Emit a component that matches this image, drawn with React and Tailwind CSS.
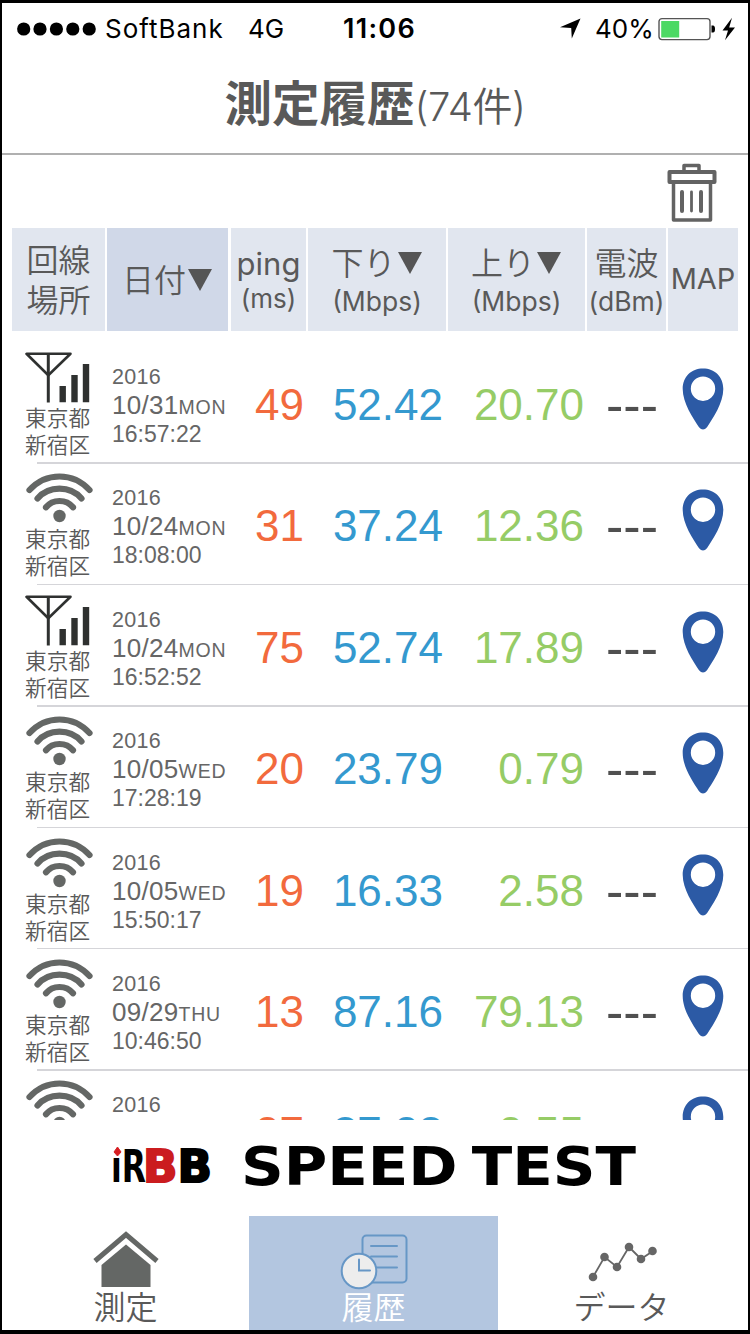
const ROWS = [
  { net: "cell", year: "2016", date: "10/31", day: "MON", time: "16:57:22", ping: "49", down: "52.42", up: "20.70" },
  { net: "wifi", year: "2016", date: "10/24", day: "MON", time: "18:08:00", ping: "31", down: "37.24", up: "12.36" },
  { net: "cell", year: "2016", date: "10/24", day: "MON", time: "16:52:52", ping: "75", down: "52.74", up: "17.89" },
  { net: "wifi", year: "2016", date: "10/05", day: "WED", time: "17:28:19", ping: "20", down: "23.79", up: "0.79" },
  { net: "wifi", year: "2016", date: "10/05", day: "WED", time: "15:50:17", ping: "19", down: "16.33", up: "2.58" },
  { net: "wifi", year: "2016", date: "09/29", day: "THU", time: "10:46:50", ping: "13", down: "87.16", up: "79.13" },
  { net: "wifi", year: "2016", date: "09/29", day: "THU", time: "10:45:12", ping: "27", down: "37.28", up: "2.55" },
];

export default function App() {
  return (
    <div className="flex h-[1334px] w-[750px] flex-col overflow-hidden border-x-2 border-t-3 border-b-4 border-black bg-white font-['Inter','Noto_Sans_CJK_JP',sans-serif] text-[#595959]">
      <StatusBar />
      <h1 className="flex h-[101px] shrink-0 items-baseline justify-center border-b-2 border-[#b0b0b0] pt-[22px] leading-none whitespace-nowrap">
        <span className="text-[47.5px] leading-[56px] font-bold">測定履歴</span>
        <span className="text-[40px] font-[350] tracking-[-0.4px]">(74件)</span>
      </h1>
      <div className="flex h-[73px] shrink-0 justify-end pt-2 pr-[31px]">
        <TrashIcon />
      </div>
      <TableHead />
      <div className="mt-[11px] h-[778px] shrink-0 overflow-hidden">
        {ROWS.map((row, idx) => (
          <HistoryRow key={idx} row={row} />
        ))}
      </div>
      <Banner />
      <TabBar />
    </div>
  );
}

function StatusBar() {
  return (
    <div className="flex h-[51px] shrink-0 items-center text-[26px] leading-none whitespace-nowrap text-black">
      <svg className="ml-[14px] h-4 w-[82px]" viewBox="0 0 82 16">
        {[7.7, 24, 40.4, 56.8, 73.2].map((x) => (
          <circle key={x} cx={x} cy="8" r="6.6" />
        ))}
      </svg>
      <span className="ml-[7px] w-[143px] tracking-[1px]">SoftBank</span>
      <span className="w-[95px]">4G</span>
      <span className="w-[217px] text-[27px] font-semibold tracking-[1.3px]">11:06</span>
      <svg className="h-[21px] w-[21px]" viewBox="0 0 21 21">
        <path d="M20.5 0.5 11.8 20.5 11.2 10 0 9.2Z" />
      </svg>
      <span className="ml-[14px] w-[63px]">40%</span>
      <svg className="h-6 w-20" viewBox="0 0 80 24">
        <rect x="1" y="1.6" width="51" height="21" rx="3" fill="#fff" stroke="#555" strokeWidth="1.4" />
        <rect x="3.2" y="4" width="18" height="16.5" fill="#4cd964" />
        <path d="M53.5 8.5h1.5q2 0 2 3.5t-2 3.5h-1.5z" />
        <path d="M74 0.8 64.5 13.5h5.5L67 23.2 77 10.5h-5.8z" />
      </svg>
    </div>
  );
}

function TrashIcon() {
  return (
    <svg className="h-[60px] w-[50px]" viewBox="0 0 50 60" fill="none" stroke="#636363" strokeWidth="4" strokeLinejoin="round" strokeLinecap="round">
      <path d="M17 8V2.5h15V8" strokeWidth="3.5" />
      <rect x="2.5" y="9" width="45" height="10" />
      <path d="M6.5 19v38h37V19" strokeWidth="3.5" />
      <path d="M15 29v19M34 29v19" />
      <path d="M24.5 29v19" strokeWidth="2.8" />
    </svg>
  );
}

function TableHead() {
  return (
    <div className="ml-[10px] flex h-[102.5px] shrink-0 gap-[2px] text-center whitespace-nowrap">
      <HeadCell className="w-[93px] bg-[#e1e6ef] pt-1">
        <span className="text-[32px] leading-[40px] font-[350]">回線</span>
        <span className="text-[32px] leading-[40px] font-[350]">場所</span>
      </HeadCell>
      <HeadCell className="mr-px w-[121px] bg-[#d0d8e8] pt-1">
        <span className="flex items-center text-[32px] leading-10 font-[350]">
          日付
          <SortMark />
        </span>
      </HeadCell>
      <HeadCell className="w-[75px] bg-[#e1e6ef] pt-1">
        <span className="text-[31px] leading-[36px]">ping</span>
        <span className="text-[26px] leading-[34px]">(ms)</span>
      </HeadCell>
      <HeadCell className="w-[138px] bg-[#e1e6ef] pt-[6px]">
        <span className="flex items-center text-[32px] leading-[38px] font-[350]">
          下り
          <SortMark />
        </span>
        <span className="text-[26.5px] leading-[37px]">(Mbps)</span>
      </HeadCell>
      <HeadCell className="w-[137px] bg-[#e1e6ef] pt-[6px]">
        <span className="flex items-center text-[32px] leading-[38px] font-[350]">
          上り
          <SortMark />
        </span>
        <span className="text-[26.5px] leading-[37px]">(Mbps)</span>
      </HeadCell>
      <HeadCell className="w-[79px] bg-[#e1e6ef] pt-[6px]">
        <span className="text-[32px] leading-[38px] font-[350]">電波</span>
        <span className="text-[26.5px] leading-[37px]">(dBm)</span>
      </HeadCell>
      <HeadCell className="w-[70px] bg-[#e1e6ef]">
        <span className="text-[29px] leading-10">MAP</span>
      </HeadCell>
    </div>
  );
}

function HeadCell({ className, children }) {
  return <div className={`flex shrink-0 flex-col items-center justify-center ${className}`}>{children}</div>;
}

function SortMark() {
  return (
    <svg className="ml-px h-6 w-[26px]" viewBox="0 0 26 24">
      <path d="M1 0h24L13 22z" fill="#555" />
    </svg>
  );
}

function HistoryRow({ row }) {
  return (
    <div className="relative flex h-[121.4px] pt-[10.5px] font-['Liberation_Sans','Noto_Sans_CJK_JP',sans-serif] leading-none whitespace-nowrap">
      <div className="w-[110px] pl-[23px]">
        {row.net === "wifi" ? <WifiIcon /> : <CellIcon />}
        <p className="mt-[2px] text-[21.7px] leading-[27px] font-[350]">
          東京都
          <br />
          新宿区
        </p>
      </div>
      <div className="w-[120px] pt-[12px] text-[#666]">
        <p className="text-[21.5px] leading-[27px] tracking-[0.3px]">{row.year}</p>
        <p className="text-[26px] leading-[29px] tracking-[0.3px]">
          {row.date}
          <span className="text-[19.5px] tracking-[0.7px]">{row.day}</span>
        </p>
        <p className="text-[23px] leading-[25px]">{row.time}</p>
      </div>
      <div className="flex h-[106px] items-center text-right text-[44px]">
        <span className="w-[72px] text-[#f26a3d]">{row.ping}</span>
        <span className="w-[139px] text-[#3499cf]">{row.down}</span>
        <span className="w-[141px] text-[#96cc66]">{row.up}</span>
        <span className="ml-[22px] w-[76px] text-left text-[52px] text-[#505050]">---</span>
      </div>
      <PinIcon />
      <div className="absolute right-0 bottom-[-1px] left-[35px] h-[1.5px] bg-[#d5d5d9]" />
    </div>
  );
}

function CellIcon() {
  return (
    <svg className="h-[51px] w-[68px]" viewBox="0 0 68 51" fill="none" stroke="#2f3130" strokeWidth="3">
      <path d="M1.5 1.8h44L23.3 23.2z" strokeLinejoin="round" strokeWidth="2.6" />
      <path d="M23.3 2v48.5" />
      <path d="M37.7 34v16.2M49.5 23v27.2M61 12v38.2" strokeWidth="6.4" />
    </svg>
  );
}

function WifiIcon() {
  return (
    <svg className="h-[51px] w-[68px]" viewBox="0 0 68 51" fill="none" stroke="#646765" strokeWidth="6.2" strokeLinecap="round">
      <path d="M4.5 17Q17 3.5 34.5 3.5T64.500 17" />
      <path d="M12.5 25.5Q21 15.700 34.500 15.700T56.500 25.500" />
      <path d="M21 34.300Q26 28 34.500 28T48 34.300" />
      <circle cx="34.5" cy="43" r="6.2" fill="#646765" stroke="none" />
    </svg>
  );
}

function PinIcon() {
  return (
    <svg className="mt-4 h-[62px] w-[42px]" viewBox="0 0 42 62">
      <path
        d="M21 .5C9.5.5.7 8.500.7 21c0 14 10.300 29 16.300 38.200Q21 64 25 59.200C31 50 41.300 35 41.300 21 41.300 8.500 32.500.5 21 .5zM21 8.500a12.200 12.200 0 1 1 0 24.400 12.200 12.200 0 0 1 0-24.400z"
        fill="#2c5aa5"
        fillRule="evenodd"
      />
    </svg>
  );
}

function Banner() {
  return (
    <div className="h-[96px] shrink-0 pl-[108px]">
      <svg className="h-24 w-[532px] font-['DejaVu_Sans',sans-serif] font-bold" viewBox="0 0 532 96">
        <path d="M7.5 27 11 32 7.5 36 4 32z" fill="#d71f23" stroke="#d71f23" />
        <text x="1" y="62" fontSize="45" textLength="35" lengthAdjust="spacingAndGlyphs">ıR</text>
        <text x="33" y="62" fontSize="45" stroke="#000" strokeWidth="2" textLength="69" lengthAdjust="spacingAndGlyphs">
          <tspan fill="#cb1c1f" stroke="#cb1c1f">B</tspan>B
        </text>
        <text x="131" y="65" fontSize="54" textLength="395" lengthAdjust="spacingAndGlyphs">
          SPEED<tspan dx="-6"> TEST</tspan>
        </text>
      </svg>
    </div>
  );
}

function TabBar() {
  return (
    <nav className="flex flex-1 text-[32px] font-[350]">
      <div className="flex w-[247px] flex-col items-center pt-[14px]">
        <svg className="h-[58px] w-[68px]" viewBox="0 0 68 58" fill="#646765">
          <path d="M3 31 34 4.5 65 31" fill="none" stroke="#646765" strokeWidth="5" />
          <path d="M34 14.5 58.5 35v22h-49V35z" />
        </svg>
        <span className="leading-10">測定</span>
      </div>
      <div className="flex w-[249px] flex-col items-center bg-[#b3c6e0] pt-[14px] text-white">
        <svg className="h-[58px] w-[68px] overflow-visible" viewBox="0 0 68 58" fill="none" stroke="#6797c6" strokeWidth="2" strokeLinecap="round">
          <rect x="22.5" y="5.5" width="44" height="47" rx="4" />
          <path d="M31 16h26M31 26.5h26M31 37.5h26" />
          <circle cx="19" cy="41" r="17.3" fill="#ededed" />
          <path d="M19 29.5v11h11" />
        </svg>
        <span className="leading-10">履歴</span>
      </div>
      <div className="flex w-[247px] flex-col items-center pt-[14px]">
        <svg className="h-[58px] w-[70px]" viewBox="0 0 70 58" stroke="#666" strokeWidth="1.8">
          <path d="M6 47 17.5 27 30 37 42 17 54 29 66 21" fill="none" />
          <g fill="#666" stroke="none">
            <circle cx="6" cy="47" r="4.3" />
            <circle cx="17.5" cy="27" r="4.3" />
            <circle cx="30" cy="37" r="4.3" />
            <circle cx="42" cy="17" r="4.3" />
            <circle cx="54" cy="29" r="4.3" />
            <circle cx="65.5" cy="21" r="4.3" />
          </g>
        </svg>
        <span className="leading-10">データ</span>
      </div>
    </nav>
  );
}
